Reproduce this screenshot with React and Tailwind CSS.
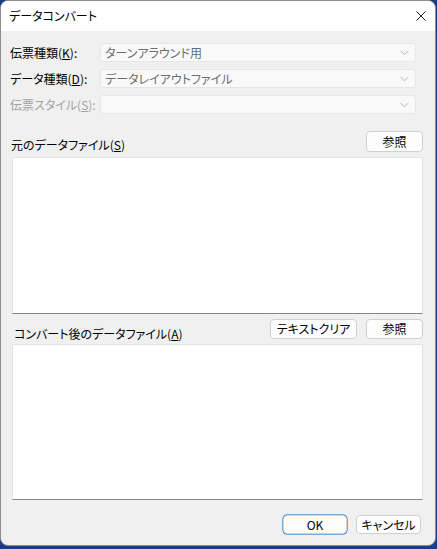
import React from 'react';

const Chevron = () => (
  <svg width="9" height="6" viewBox="0 0 9 6" className="shrink-0">
    <path d="M0.5 0.8 L4.5 4.8 L8.5 0.8" fill="none" stroke="#b5b5b5" strokeWidth="1" />
  </svg>
);

const Combo = ({ value }) => (
  <div className="flex h-[19px] w-[316px] items-center justify-between rounded-[3px] border border-[#e6e6e6] bg-[#f9f9f9] pl-[4px] pr-[6px]">
    <span className="whitespace-nowrap text-[12px] leading-none text-[#6d6d6d]">{value}</span>
    <Chevron />
  </div>
);

const Button = ({ children, className = '' }) => (
  <button className={`flex items-center justify-center whitespace-nowrap rounded-[4px] border border-[#d0d0d0] bg-[#fdfdfd] text-[12px] leading-none text-black ${className}`}>
    {children}
  </button>
);

const Field = ({ label, accel, value, disabled }) => (
  <div className="flex items-center">
    <span className={`w-[90px] shrink-0 whitespace-nowrap text-[12px] leading-none ${disabled ? 'text-[#a3a3a3]' : 'text-black'}`}>
      {label}(<span className="underline underline-offset-1">{accel}</span>):
    </span>
    <Combo value={value} />
  </div>
);

export default function App() {
  return (
    <div className="h-[549px] w-[437px] bg-[#1c3a88] font-['Noto_Sans_CJK_JP','Noto_Sans',sans-serif] [font-feature-settings:'palt']">
      <div className="flex h-[546px] w-[436px] flex-col overflow-hidden rounded-[8px] border border-[#8e8e8e] bg-[#f0f0f0]">
        {/* title bar */}
        <div className="flex h-[30px] shrink-0 items-center justify-between bg-white pl-[8px] pr-[9px]">
          <span className="text-[12px] leading-none text-black">データコンバート</span>
          <svg width="10" height="10" viewBox="0 0 10 10">
            <path d="M0.5 0.5 L9.5 9.5 M9.5 0.5 L0.5 9.5" stroke="#1a1a1a" strokeWidth="1" />
          </svg>
        </div>

        <div className="flex flex-col pl-[9px] pt-[12px]">
          <div className="flex flex-col gap-[7px]">
            <Field label="伝票種類" accel="K" value="ターンアラウンド用" />
            <Field label="データ種類" accel="D" value="データレイアウトファイル" />
            <Field label="伝票スタイル" accel="S" value="" disabled />
          </div>
        </div>

        <div className="flex flex-col pl-[10px] pr-[12px]">
          <div className="mt-[17px] flex items-end justify-between">
            <span className="mb-[1px] whitespace-nowrap text-[12px] leading-none text-black">
              元のデータファイル(<span className="underline underline-offset-1">S</span>)
            </span>
            <Button className="h-[21px] w-[57px]">参照</Button>
          </div>
          <div className="ml-[1px] mt-[5px] h-[157px] border border-[#e3e3e3] border-b-[#868686] bg-white" />

          <div className="mt-[5px] flex items-end justify-between">
            <span className="mb-[-1px] ml-[3px] whitespace-nowrap text-[12px] leading-none text-black">
              コンバート後のデータファイル(<span className="underline underline-offset-1">A</span>)
            </span>
            <div className="flex gap-[9px]">
              <Button className="h-[20px] w-[87px]">テキストクリア</Button>
              <Button className="h-[20px] w-[57px]">参照</Button>
            </div>
          </div>
          <div className="ml-[1px] mt-[5px] h-[156px] border border-[#e3e3e3] border-b-[#868686] bg-white" />

          <div className="mt-[15px] flex justify-end gap-[9px] pr-[2px]">
            <Button className="h-[19px] w-[64px] border-[#0067c0] shadow-[0_0_0_0.5px_#0067c0]">OK</Button>
            <Button className="h-[19px] w-[65px]">キャンセル</Button>
          </div>
        </div>
      </div>
    </div>
  );
}
